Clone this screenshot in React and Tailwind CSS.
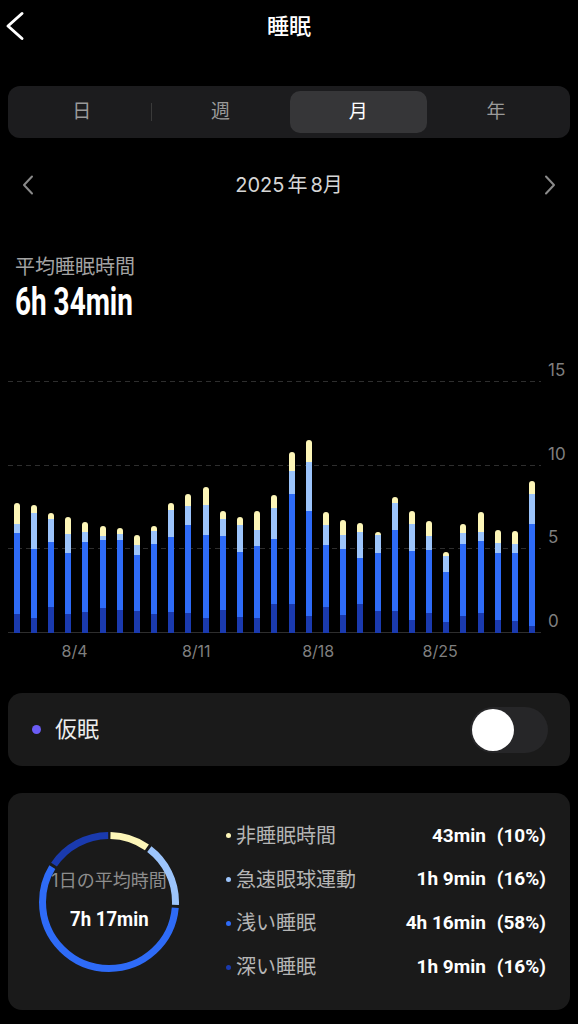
// segment heights in 1/3 px: [deep, light, rem, awake]
const BARS = [
  [58, 242, 26, 64], [45, 208, 106, 26], [77, 197, 67, 20], [56, 183, 59, 49],
  [64, 208, 30, 30], [76, 202, 14, 28], [69, 210, 17, 19], [65, 169, 31, 29],
  [58, 210, 37, 15], [62, 227, 80, 21], [60, 264, 56, 37], [45, 248, 92, 54],
  [70, 222, 49, 24], [47, 195, 82, 24], [46, 214, 48, 57], [88, 193, 95, 38],
  [88, 330, 67, 59], [50, 316, 148, 66], [77, 187, 59, 40], [53, 200, 40, 47],
  [86, 139, 79, 26], [65, 176, 52, 10], [66, 242, 83, 16], [40, 206, 82, 37],
  [59, 189, 42, 47], [33, 149, 50, 11], [50, 218, 33, 26], [59, 218, 27, 60],
  [40, 200, 30, 39], [35, 204, 27, 39], [22, 306, 88, 40],
];

const X_LABELS = { 3: '8/4', 10: '8/11', 17: '8/18', 24: '8/25' };

const ROWS = [
  { h: 'h-[22px]', label: '15' },
  { h: 'h-[84px]', label: '10' },
  { h: 'h-[83px]', label: '5' },
  { h: 'h-[84px]', label: '0', solid: true },
];

const LEGEND = [
  { dot: 'bg-[#fdf6b8]', label: '非睡眠時間', time: '43min', pct: '(10%)' },
  { dot: 'bg-[#9cc4fb]', label: '急速眼球運動', time: '1h 9min', pct: '(16%)' },
  { dot: 'bg-[#2e6bf7]', label: '浅い睡眠', time: '4h 16min', pct: '(58%)' },
  { dot: 'bg-[#1a3aae]', label: '深い睡眠', time: '1h 9min', pct: '(16%)' },
];

const RING = [
  { frac: 0.1, color: '#fdf6b8' },
  { frac: 0.16, color: '#9cc4fb' },
  { frac: 0.58, color: '#2e6bf7' },
  { frac: 0.16, color: '#1a3aae' },
];

const JP = "font-['Inter','Noto_Sans_CJK_JP',sans-serif]";
const NUM = "font-['Roboto','Noto_Sans_CJK_JP',sans-serif]";

const Chevron = ({ dir = 'left', className, w, h, stroke }) => (
  <svg width={w} height={h} viewBox={`0 0 ${w} ${h}`} className={className} fill="none">
    <path
      d={
        dir === 'left'
          ? `M${w - 3} 2.5 L3 ${h / 2} L${w - 3} ${h - 2.5}`
          : `M3 2.5 L${w - 3} ${h / 2} L3 ${h - 2.5}`
      }
      stroke="currentColor"
      strokeWidth={stroke}
      strokeLinecap="round"
      strokeLinejoin="round"
    />
  </svg>
);

const Bar = ({ d }) => {
  const [deep, light, rem, awake] = d;
  return (
    <div className="flex-1 flex justify-center items-end">
      <div className="w-[6px] flex flex-col rounded-t-[3px] overflow-hidden">
        <div className="bg-[#fdf6b8]" style={{ height: awake / 3 }} />
        <div className="bg-[#9cc4fb]" style={{ height: rem / 3 }} />
        <div className="bg-[#2e6bf7]" style={{ height: light / 3 }} />
        <div className="bg-[#1a3aae]" style={{ height: deep / 3 }} />
      </div>
    </div>
  );
};

const Donut = () => {
  const r = 66.5;
  const c = 2 * Math.PI * r;
  const gap = 3;
  let start = 0;
  return (
    <svg width="140" height="140" viewBox="0 0 140 140" className="-rotate-90">
      {RING.map((s, i) => {
        const len = s.frac * c;
        const el = (
          <circle
            key={i}
            cx="70"
            cy="70"
            r={r}
            fill="none"
            stroke={s.color}
            strokeWidth="7"
            strokeDasharray={`${len - gap} ${c}`}
            strokeDashoffset={-(start + gap / 2)}
          />
        );
        start += len;
        return el;
      })}
    </svg>
  );
};

export default function App() {
  return (
    <div className={`w-[578px] h-[1024px] bg-black text-white overflow-hidden ${JP}`}>
      {/* header */}
      <div className="h-[52px] flex items-center">
        <div className="w-[50px] pl-[5px] flex items-center">
          <Chevron w={20} h={30} stroke={3} className="text-white" />
        </div>
        <div className="flex-1 text-center text-[22px] font-medium">睡眠</div>
        <div className="w-[50px]" />
      </div>

      {/* period tabs */}
      <div className="mt-[34px] mx-2 h-[52px] rounded-[12px] bg-[#1c1c1e] p-[5px] flex items-center text-[19px]">
        <div className="flex-1 h-full flex items-center justify-center text-[#9a9a9a]">日</div>
        <div className="w-px h-[18px] bg-[#3a3a3a]" />
        <div className="flex-1 h-full flex items-center justify-center text-[#9a9a9a]">週</div>
        <div className="flex-1 h-full flex items-center justify-center rounded-[10px] bg-[#363638] text-white">月</div>
        <div className="flex-1 h-full flex items-center justify-center text-[#9a9a9a]">年</div>
      </div>

      {/* month nav */}
      <div className="mt-[27px] h-[40px] px-[21px] flex items-center justify-between">
        <Chevron w={14} h={22} stroke={2} className="text-[#8a8a8a]" />
        <div className="text-[20px] text-[#d6d6d6]">
          2025<span className="mx-[3px]">年</span>8月
        </div>
        <Chevron dir="right" w={14} h={22} stroke={2} className="text-[#8a8a8a]" />
      </div>

      {/* average */}
      <div className="mt-[49px] px-[15px] text-[20px] leading-[26px] text-[#a3a3a3]">平均睡眠時間</div>
      <div className={`mt-[3px] px-[15px] h-[38px] ${NUM}`}>
        <span className="inline-block origin-left scale-x-[0.735] text-[38px] leading-[38px] font-bold whitespace-nowrap">
          6h 34min
        </span>
      </div>

      {/* chart */}
      <div className="mt-[39px] grid">
        <div className="col-start-1 row-start-1 flex flex-col">
          {ROWS.map((row) => (
            <div key={row.label} className={`flex items-end ${row.h}`}>
              <div
                className={`ml-2 w-[533px] h-px ${
                  row.solid
                    ? 'bg-[#2e2e2e]'
                    : 'bg-[repeating-linear-gradient(90deg,#2e2e2e_0_5px,transparent_5px_9px)]'
                }`}
              />
              <span className="ml-[7px] mb-[2px] text-[17px] leading-[20px] text-[#7f7f7f]">{row.label}</span>
            </div>
          ))}
        </div>
        <div className="col-start-1 row-start-1 ml-2 w-[533px] flex items-end">
          {BARS.map((d, i) => (
            <Bar key={i} d={d} />
          ))}
        </div>
      </div>
      <div className="ml-2 w-[533px] mt-[7px] flex text-[16px] leading-[22px] text-[#7f7f7f]">
        {BARS.map((_, i) => (
          <div key={i} className="flex-1 min-w-0 whitespace-nowrap pl-[2px]">
            {X_LABELS[i] || ''}
          </div>
        ))}
      </div>

      {/* nap toggle */}
      <div className="mt-[31px] mx-2 h-[73px] rounded-[14px] bg-[#1a1a1a] pl-[24px] pr-[22px] flex items-center">
        <div className="w-[9px] h-[9px] rounded-full bg-[#6b5cf5]" />
        <div className="ml-[14px] flex-1 text-[22px] text-[#ededed]">仮眠</div>
        <div className="w-[78px] h-[46px] rounded-full bg-[#262628] p-[2px] flex items-center">
          <div className="w-[42px] h-[42px] rounded-full bg-white" />
        </div>
      </div>

      {/* summary */}
      <div className="mt-[27px] mx-2 h-[217px] rounded-[14px] bg-[#1a1a1a] pl-[31px] pr-[24px] flex items-center">
        <div className="w-[140px] h-[140px] grid place-items-center">
          <div className="col-start-1 row-start-1">
            <Donut />
          </div>
          <div className="col-start-1 row-start-1 flex flex-col items-center">
            <div className="text-[18px] leading-[22px] text-[#8d8d8d] whitespace-nowrap">1日の平均時間</div>
            <div className={`mt-[14px] ${NUM}`}>
              <span className="inline-block scale-x-[0.885] text-[21px] leading-[26px] font-bold whitespace-nowrap">
                7h 17min
              </span>
            </div>
          </div>
        </div>
        <div className="ml-[47px] flex-1 flex flex-col">
          {LEGEND.map((row) => (
            <div key={row.label} className="h-[43.7px] flex items-center">
              <div className={`w-[5px] h-[5px] rounded-full ${row.dot}`} />
              <div className="ml-[5px] flex-1 text-[20px] text-[#b5b5b5] whitespace-nowrap">{row.label}</div>
              <div className={`flex gap-[11px] text-[19px] font-bold whitespace-nowrap ${NUM}`}>
                <span>{row.time}</span>
                <span>{row.pct}</span>
              </div>
            </div>
          ))}
        </div>
      </div>
    </div>
  );
}
